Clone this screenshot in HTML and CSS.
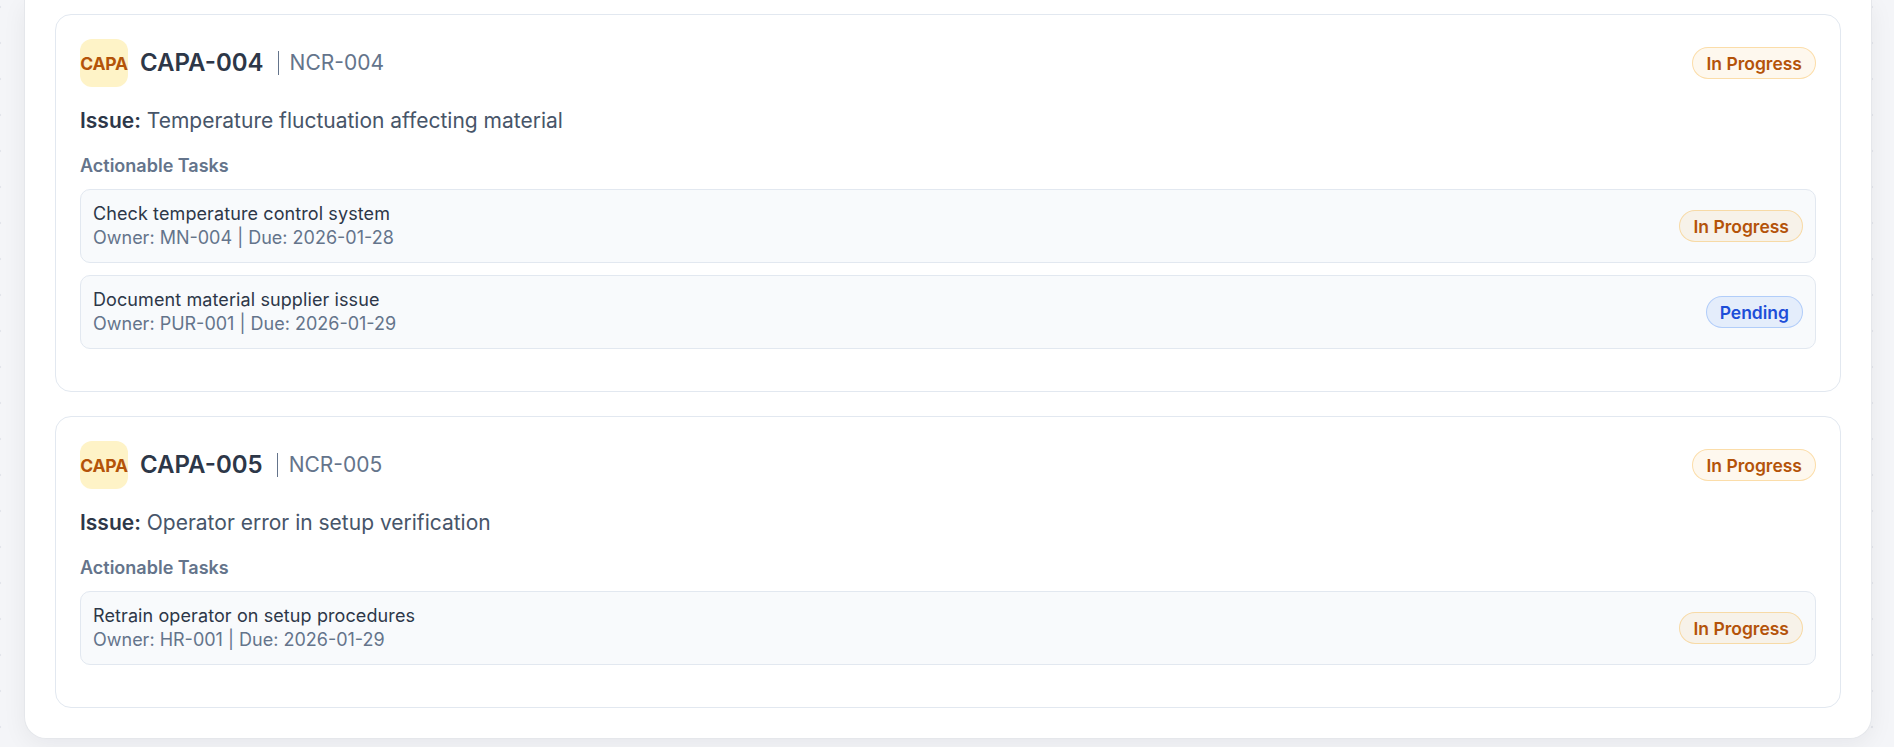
FILE: index.html
```html
<!DOCTYPE html>
<html lang="en">
<head>
<meta charset="utf-8">
<title>CAPA</title>
<link rel="stylesheet" href="styles.css">
</head>
<body>
<div class="panel">
  <section class="card">
    <div class="card-head">
      <div class="head-left">
        <div class="badge">CAPA</div>
        <h2 class="capa-id">CAPA-004</h2>
        <span class="ncr">NCR-004</span>
      </div>
      <span class="pill pill-progress">In Progress</span>
    </div>
    <p class="issue"><strong>Issue:</strong> Temperature fluctuation affecting material</p>
    <h3 class="tasks-title">Actionable Tasks</h3>
    <div class="tasks">
      <div class="task">
        <div class="task-info">
          <div class="task-name">Check temperature control system</div>
          <div class="task-meta">Owner: MN-004 | Due: 2026-01-28</div>
        </div>
        <span class="pill pill-progress pill-task">In Progress</span>
      </div>
      <div class="task">
        <div class="task-info">
          <div class="task-name">Document material supplier issue</div>
          <div class="task-meta">Owner: PUR-001 | Due: 2026-01-29</div>
        </div>
        <span class="pill pill-pending">Pending</span>
      </div>
    </div>
  </section>
  <section class="card">
    <div class="card-head">
      <div class="head-left">
        <div class="badge">CAPA</div>
        <h2 class="capa-id">CAPA-005</h2>
        <span class="ncr">NCR-005</span>
      </div>
      <span class="pill pill-progress">In Progress</span>
    </div>
    <p class="issue"><strong>Issue:</strong> Operator error in setup verification</p>
    <h3 class="tasks-title">Actionable Tasks</h3>
    <div class="tasks">
      <div class="task">
        <div class="task-info">
          <div class="task-name">Retrain operator on setup procedures</div>
          <div class="task-meta">Owner: HR-001 | Due: 2026-01-29</div>
        </div>
        <span class="pill pill-progress pill-task">In Progress</span>
      </div>
    </div>
  </section>
</div>
</body>
</html>
```

FILE: styles.css
```css
* { box-sizing: border-box; }
html, body { margin: 0; padding: 0; }
body {
  font-family: Inter, "Noto Sans", "Liberation Sans", sans-serif;
  background-color: #f4f5f8;
  background-image: radial-gradient(circle, #e3e6ec 1.2px, transparent 1.6px);
  background-size: 36px 36px;
  background-position: -18px -11px;
  min-height: 747px;
  overflow: hidden;
}
.panel {
  width: 1848px;
  margin: 0 0 0 24px;
  background: #ffffff;
  border: 1px solid #e5e7eb;
  border-top: 0;
  border-radius: 0 0 22px 22px;
  padding: 14px 30px 30px 30px;
  box-shadow: 0 6px 24px rgba(15, 23, 42, 0.06);
  display: flex;
  flex-direction: column;
  gap: 24px;
}
.card {
  border: 1px solid #e2e8f0;
  border-radius: 16px;
  padding: 24px 24px 42px 24px;
  background: #ffffff;
}
.card-head {
  display: flex;
  align-items: center;
  justify-content: space-between;
  height: 48px;
}
.head-left {
  display: flex;
  align-items: center;
}
.badge {
  width: 48px;
  height: 48px;
  border-radius: 12px;
  background: #fef3c7;
  color: #b45309;
  font-weight: 700;
  font-size: 17.5px;
  display: flex;
  align-items: center;
  justify-content: center;
  letter-spacing: -0.2px;
  white-space: nowrap;
}
.capa-id {
  margin: 0 0 0 12px;
  font-size: 24px;
  font-weight: 600;
  color: #2d3748;
  line-height: 32px;
}
.ncr {
  margin-left: 14px;
  padding-left: 11px;
  border-left: 1.5px solid #64748b;
  font-size: 21px;
  line-height: 24px;
  color: #64748b;
}
.pill {
  display: inline-flex;
  align-items: center;
  height: 32px;
  padding: 0 13px;
  border-radius: 999px;
  font-size: 17.5px;
  font-weight: 600;
  border: 1px solid;
  white-space: nowrap;
}
.pill-progress {
  color: #b45309;
  background: rgba(245, 158, 11, 0.07);
  border-color: rgba(245, 158, 11, 0.3);
}
.pill-task {
  background: rgba(245, 158, 11, 0.08);
}
.pill-pending {
  color: #1d4ed8;
  background: rgba(59, 130, 246, 0.1);
  border-color: rgba(59, 130, 246, 0.3);
}
.issue {
  margin: 20px 0 0 0;
  font-size: 21px;
  line-height: 28px;
  color: #475569;
}
.issue strong {
  font-weight: 600;
  color: #2d3748;
}
.tasks-title {
  margin: 21px 0 13px 0;
  font-size: 18px;
  line-height: 20px;
  font-weight: 600;
  color: #64748b;
}
.tasks {
  display: flex;
  flex-direction: column;
  gap: 12px;
}
.task {
  display: flex;
  align-items: center;
  justify-content: space-between;
  padding: 12px;
  background: #f8fafc;
  border: 1px solid #e2e8f0;
  border-radius: 10px;
}
.task-name {
  font-size: 18px;
  line-height: 24px;
  font-weight: 400;
  color: #2d3748;
  letter-spacing: 0.1px;
}
.task-meta {
  font-size: 18px;
  line-height: 24px;
  color: #64748b;
}
```
